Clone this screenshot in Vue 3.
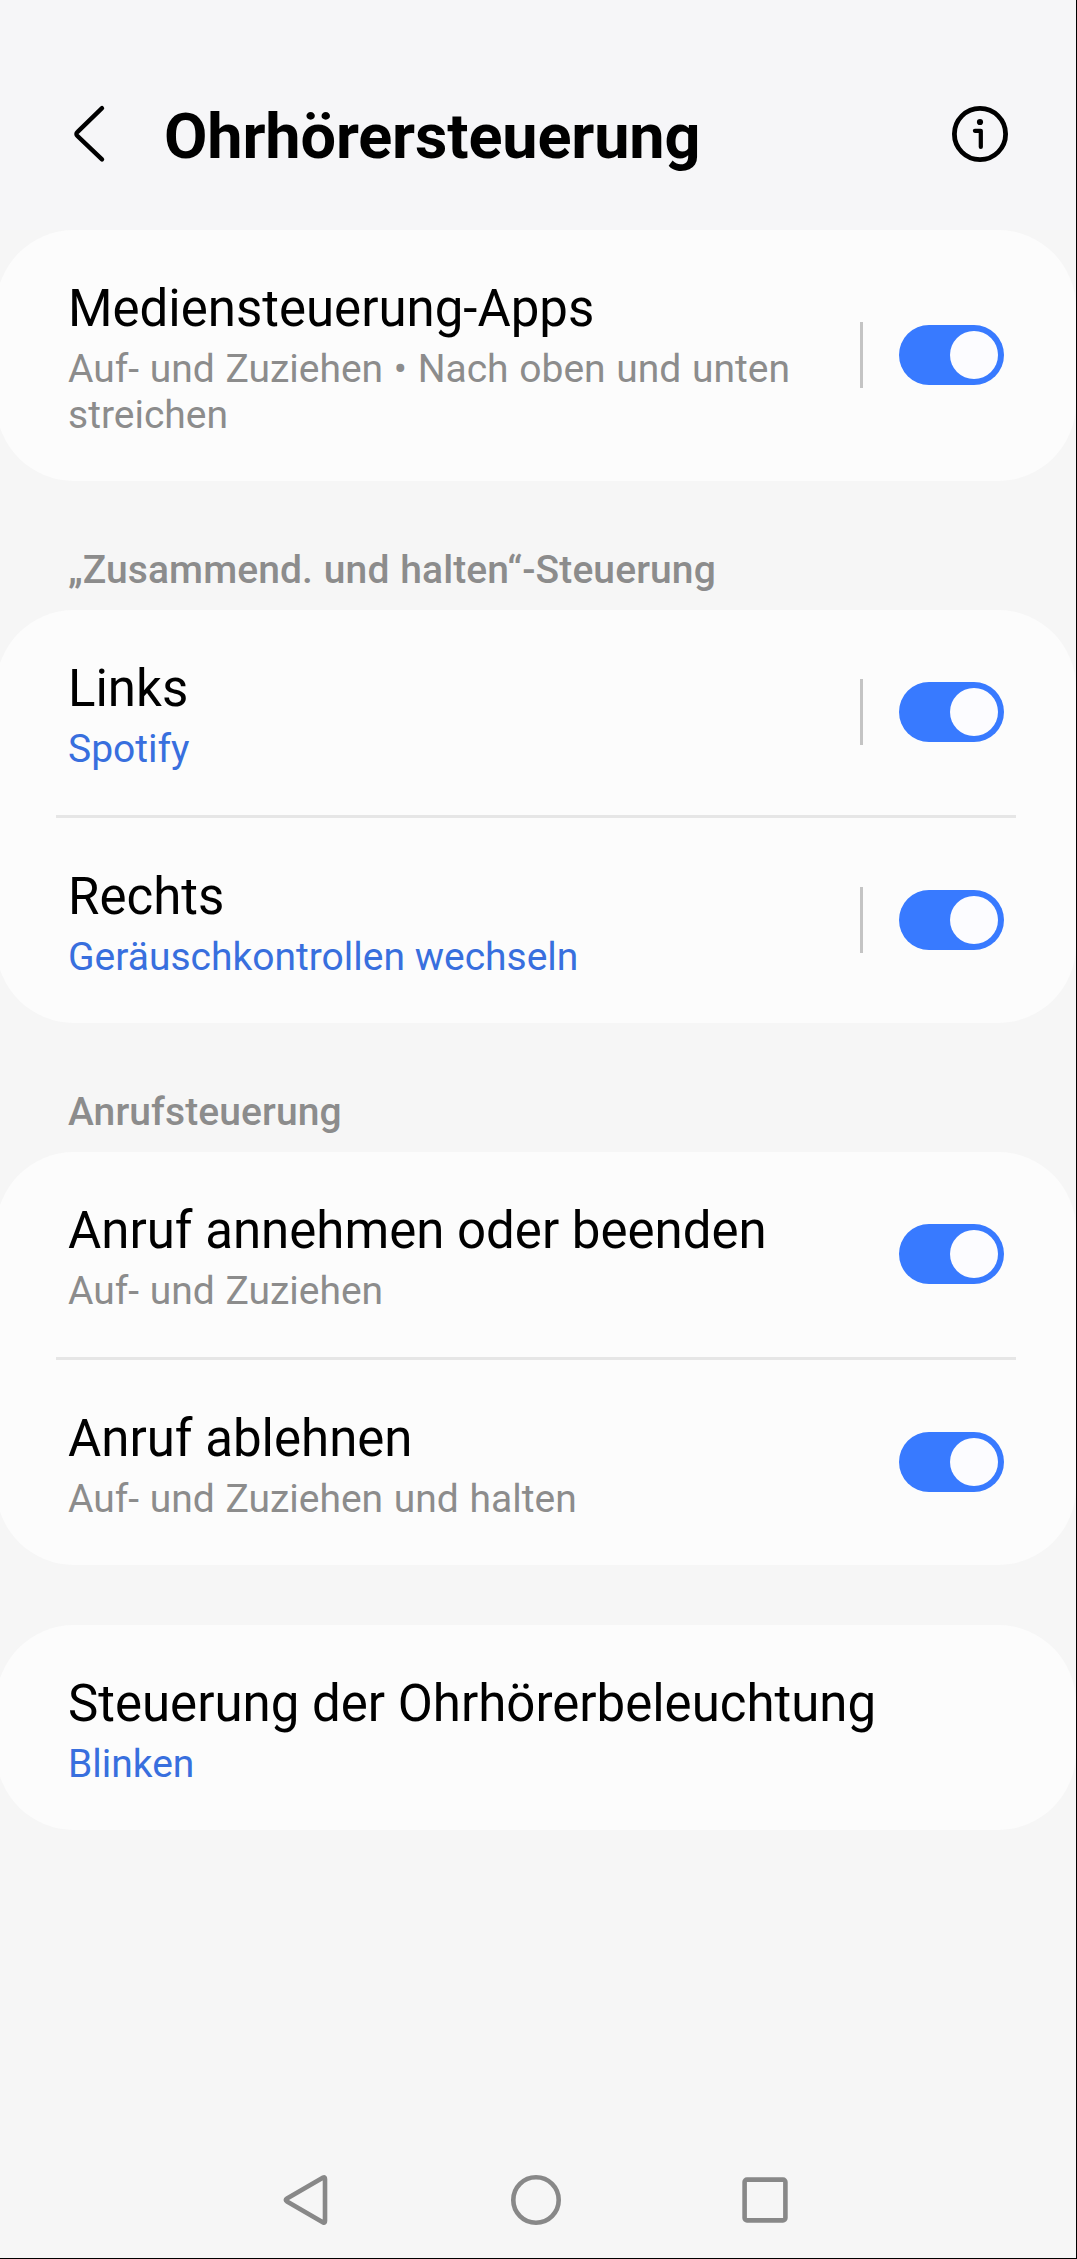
<script setup>
import { reactive } from 'vue';

const sections = reactive([
  {
    heading: '',
    rows: [
      { title: 'Mediensteuerung-Apps', text: 'Auf- und Zuziehen • Nach oben und unten streichen', split: true, on: true }
    ]
  },
  {
    heading: '„Zusammend. und halten“-Steuerung',
    rows: [
      { title: 'Links', text: 'Spotify', value: true, split: true, on: true },
      { title: 'Rechts', text: 'Geräuschkontrollen wechseln', value: true, split: true, on: true }
    ]
  },
  {
    heading: 'Anrufsteuerung',
    rows: [
      { title: 'Anruf annehmen oder beenden', text: 'Auf- und Zuziehen', on: true },
      { title: 'Anruf ablehnen', text: 'Auf- und Zuziehen und halten', on: true }
    ]
  },
  {
    heading: '',
    rows: [
      { title: 'Steuerung der Ohrhörerbeleuchtung', text: 'Blinken', value: true }
    ]
  }
]);

const toggle = (row) => {
  row.on = !row.on;
};
</script>

<template>
  <div class="screen">
    <header class="header">
      <svg class="icon-back" viewBox="0 0 72 72">
        <path d="M48 10.2 L23.6 33.8 Q21.2 36 23.6 38.2 L48 61.4" />
      </svg>
      <h1>Ohrhörersteuerung</h1>
      <svg class="icon-info" viewBox="0 0 72 72">
        <circle cx="36" cy="36" r="25.6" />
        <circle cx="36" cy="24" r="3.1" class="dot" />
        <path d="M30.9 32.8 H36.8 V49" />
      </svg>
    </header>

    <main class="content">
      <section v-for="(section, i) in sections" :key="i" class="section">
        <h2 v-if="section.heading">{{ section.heading }}</h2>
        <div class="card">
          <div v-for="row in section.rows" :key="row.title" class="row">
            <div class="label">
              <div class="title">{{ row.title }}</div>
              <div class="text" :class="{ value: row.value }">{{ row.text }}</div>
            </div>
            <span v-if="row.split" class="separator"></span>
            <button
              v-if="row.on !== undefined"
              type="button"
              role="switch"
              class="switch"
              :class="{ on: row.on }"
              :aria-checked="row.on"
              :aria-label="row.title"
              @click="toggle(row)"
            >
              <span class="knob"></span>
            </button>
          </div>
        </div>
      </section>
    </main>

    <nav class="navbar">
      <svg viewBox="0 0 60 60">
        <path d="M48.2 7.6 Q50 6.6 50 9 V51 Q50 53.4 48.2 52.4 L12 31.4 Q9.6 30 12 28.6 Z" />
      </svg>
      <svg viewBox="0 0 60 60">
        <circle cx="30" cy="30" r="22.7" />
      </svg>
      <svg viewBox="0 0 60 60">
        <rect x="9.6" y="9.6" width="40.8" height="40.8" rx="2.4" />
      </svg>
    </nav>
  </div>
</template>

<style>
body {
  margin: 0;
  background: #f5f5f5;
}
</style>

<style scoped>
.screen {
  display: flex;
  flex-direction: column;
  box-sizing: border-box;
  width: 1077px;
  height: 2259px;
  overflow: hidden;
  border-right: 1px solid #000;
  border-bottom: 1px solid #000;
  background: #f6f6f6;
  color: #000;
  font-family: Roboto, sans-serif;
}

.header {
  display: flex;
  align-items: flex-start;
  box-sizing: border-box;
  height: 230px;
  padding: 98px 60px 0 54px;
  background: #f6f6f8;
}

.header svg {
  flex: none;
  width: 72px;
  height: 72px;
  fill: none;
  stroke: #000;
  stroke-width: 4.4;
  stroke-linecap: round;
  stroke-linejoin: round;
}

.header .icon-info {
  stroke-width: 4.8;
}

.header .icon-info path {
  stroke-width: 4.2;
}

.header .dot {
  fill: #000;
  stroke: none;
}

h1 {
  flex: 1;
  margin: 2px 0 0 38px;
  font-size: 63px;
  font-weight: 700;
  line-height: 74px;
  letter-spacing: -0.15px;
  white-space: nowrap;
}

.content {
  flex: 1;
}

.section:last-child {
  margin-top: 60px;
}

h2 {
  margin: 0;
  padding: 66px 68px 17px;
  color: #8c8c8c;
  font-size: 39px;
  font-weight: 500;
  line-height: 46px;
  letter-spacing: 0.1px;
  word-spacing: 1px;
}

/* cards bleed a little over the left edge of the screen */
.card {
  margin-left: -4px;
  border-radius: 78px;
  background: #fcfcfc;
}

.row {
  display: flex;
  align-items: center;
  box-sizing: border-box;
  padding: 49px 72px 43px;
}

.row + .row {
  position: relative;
  margin-top: 3px;
}

.row + .row::before {
  content: '';
  position: absolute;
  top: -3px;
  left: 60px;
  right: 60px;
  height: 3px;
  background: #e6e6e6;
}

.label {
  flex: 1;
}

.title {
  font-size: 51px;
  line-height: 60px;
}

.text {
  margin-top: 7px;
  color: #8c8c8c;
  font-size: 39px;
  line-height: 46px;
  word-spacing: 1px;
}

.text.value {
  color: #386fde;
  word-spacing: 0;
}

.separator {
  flex: none;
  width: 3px;
  height: 66px;
  margin: -7px 36px 0 30px;
  background: #c4c4c4;
}

.switch {
  flex: none;
  box-sizing: border-box;
  width: 105px;
  height: 60px;
  margin: -7px 0 0;
  padding: 6px;
  border: none;
  border-radius: 30px;
  background: #a6a6a6;
  cursor: pointer;
}

.switch.on {
  background: #387aff;
}

.knob {
  display: block;
  width: 48px;
  height: 48px;
  border-radius: 50%;
  background: #fcfcff;
}

.switch.on .knob {
  margin-left: auto;
}

.navbar {
  display: flex;
  gap: 169px;
  padding: 0 0 28px 277px;
}

.navbar svg {
  width: 60px;
  height: 60px;
  fill: none;
  stroke: #888;
  stroke-width: 4.6;
  stroke-linejoin: round;
}

.navbar svg:first-child {
  margin: 0 2px 0 -2px;
}
</style>
